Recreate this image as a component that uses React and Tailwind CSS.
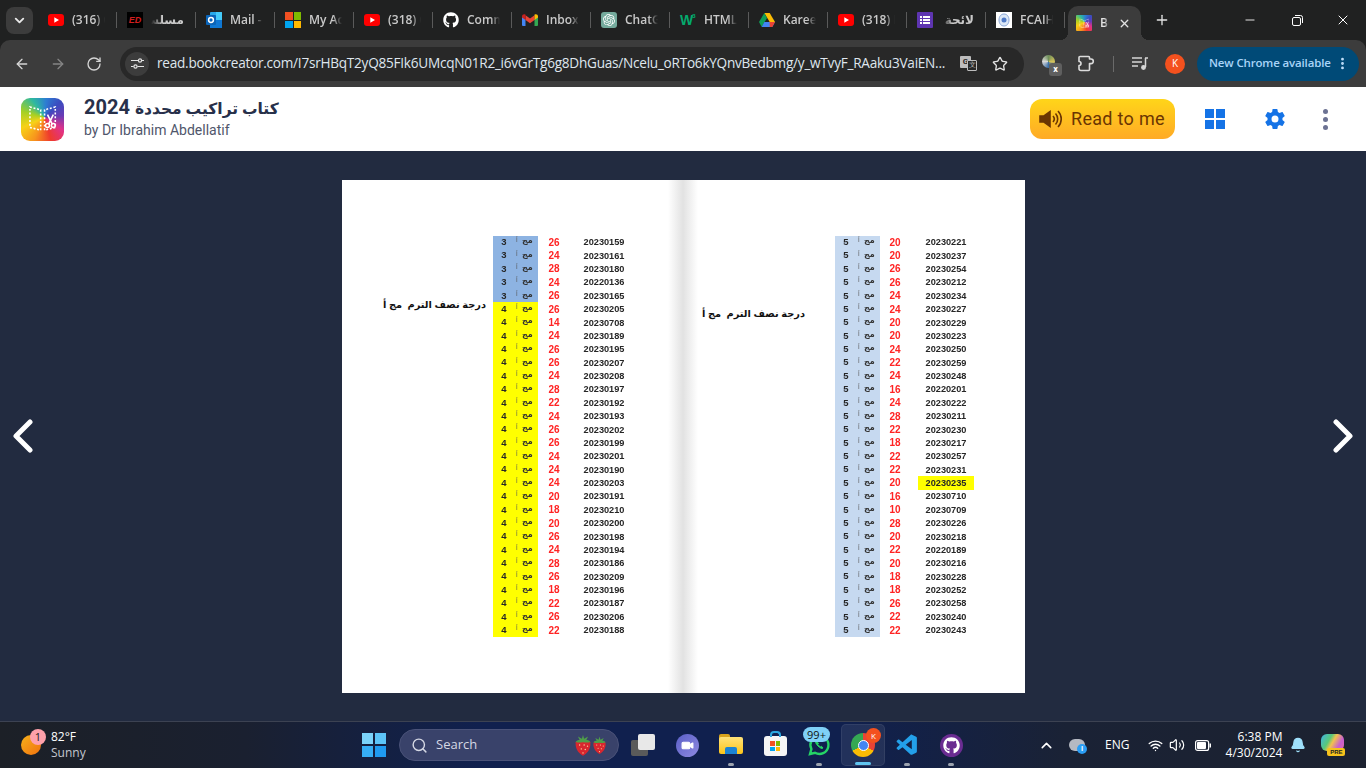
import React from "react";
import { FaGithub } from "react-icons/fa";
import { SiOpenai } from "react-icons/si";
import { VscVscode } from "react-icons/vsc";
import { ArrowLeft, ArrowRight, RotateCw, Star, Minus, X, Plus, ChevronDown, EllipsisVertical, Search, Wifi, Volume2, ChevronUp, Bell, Video } from "lucide-react";

const YT = () => (
  <svg width="16" height="12" viewBox="0 0 16 12"><rect width="16" height="12" rx="3" fill="#f00" /><path d="M6.3 3.3v5.4L11 6z" fill="#fff" /></svg>
);
const ED = () => (
  <div className="w-4 h-4 bg-black flex items-center justify-center text-[9px] leading-none font-bold italic text-[#d21f1f] font-['Liberation_Sans',sans-serif]">ED</div>
);
const Outlook = () => (
  <svg width="16" height="16" viewBox="0 0 16 16"><rect x="4" width="12" height="16" rx="1" fill="#28a8ea" /><rect x="4" y="8" width="12" height="8" fill="#0f78d4" /><rect x="10" y="0" width="6" height="8" fill="#50d9ff" opacity=".7" /><rect y="3" width="10" height="10" rx="1" fill="#0a64b8" /><circle cx="5" cy="8" r="2.4" fill="none" stroke="#fff" strokeWidth="1.5" /></svg>
);
const MS = () => (
  <div className="w-4 h-4 grid grid-cols-2 gap-px">
    <div className="bg-[#f25022]" /><div className="bg-[#7fba00]" /><div className="bg-[#00a4ef]" /><div className="bg-[#ffb900]" />
  </div>
);
const Gmail = () => (
  <svg width="16" height="12" viewBox="0 0 16 12"><path d="M0 2v9a1 1 0 0 0 1 1h2.5V5.5z" fill="#4285f4" /><path d="M16 2v9a1 1 0 0 1-1 1h-2.5V5.5z" fill="#34a853" /><path d="M3.5 6V1.2L8 4.6l4.5-3.4V6L8 9.2z" fill="#ea4335" /><path d="M0 2.4C0 .6 1.9-.4 3.3.6l.2.2V6L0 3.4z" fill="#c5221f" /><path d="M16 2.4c0-1.800-1.900-2.800-3.300-1.800l-.2.2V6L16 3.400z" fill="#fbbc04" /></svg>
);
const GPT = () => (
  <div className="w-4 h-4 rounded-[3px] bg-[#74aa9c] flex items-center justify-center text-white"><SiOpenai size={12} /></div>
);
const W3 = () => (
  <div className="w-4 h-4 flex items-start text-[#04aa6d] font-bold text-[14px] leading-[16px] font-['Liberation_Sans',sans-serif]">W<span className="text-[6px] leading-[8px] -ml-px">3</span></div>
);
const Drive = () => (
  <svg width="16" height="14" viewBox="0 0 16 14"><path d="M5.300 0h5.400l5.300 9h-5.300z" fill="#fbbc04" /><path d="M5.300 0 0 9l2.700 5 5.300-9z" fill="#0f9d58" /><path d="M2.700 14h10.600l2.700-5H5.300z" fill="#4285f4" /><path d="M10.700 9H16l-2.700 5h-2.600z" fill="#ea4335" /></svg>
);
const Forms = () => (
  <div className="w-4 h-4 bg-[#5e35b1] rounded-[1px] flex items-center justify-center">
    <svg width="10" height="8" viewBox="0 0 10 8" fill="#fff"><rect width="2" height="2" /><rect x="3" width="7" height="2" /><rect y="3" width="2" height="2" /><rect x="3" y="3" width="7" height="2" /><rect y="6" width="2" height="2" /><rect x="3" y="6" width="7" height="2" /></svg>
  </div>
);
const FCAI = () => (
  <div className="w-4 h-4 bg-white flex items-center justify-center">
    <svg width="12" height="14" viewBox="0 0 12 14"><path d="M6 1c3 0 5 2.500 5 6s-2 6-5 6-5-2.500-5-6 2-6 5-6z" fill="#dbe7f6" stroke="#8aa7d8" /><circle cx="6" cy="7" r="2.500" fill="#4f7ac7" /></svg>
  </div>
);
const BCIcon = ({ size = 16 }) => (
  <div style={{ width: size, height: size, borderRadius: size > 20 ? 9 : 1 }} className="bg-[conic-gradient(from_45deg_at_55%_45%,#3b4cc0,#6a3bb5,#e0328a,#ef3b2d,#f7941d,#f7d117,#a5d024,#2eb8a0,#2d7dd2,#3b4cc0)] flex items-center justify-center shrink-0">
    <svg width={size * 0.68} height={size * 0.68} viewBox="0 0 30 30" fill="none" stroke="#fff" strokeWidth="1.600" strokeDasharray="2 1.800"><path d="M2 3l11 3v21L2 24zM28 3L17 6v21l11-3z" /><circle cx="20" cy="22" r="2" strokeDasharray="none" /><circle cx="26" cy="22" r="2" strokeDasharray="none" /><path d="M20 11l5 10M26 11l-5 10" strokeDasharray="none" /></svg>
  </div>
);
const Strawberry = ({ w, h }) => (
  <svg width={w} height={h} viewBox="0 0 16 20">
    <path d="M8 19.500C3 17 .8 11.500 1.600 7.500 3 5 13 5 14.400 7.500 15.200 11.500 13 17 8 19.500z" fill="#d9262e" />
    <path d="M1.500 7C3 5.500 4 5.500 5 5.500L3.500 2.500 7 4.500 8 1l1 3.500 3.500-2L11 5.500c1 0 2 0 3.500 1.500-2 1.500-4 .5-6.500.5S3.500 8.500 1.500 7z" fill="#4f9e4a" />
    <g fill="#ffd9a0"><circle cx="5" cy="10" r=".6" /><circle cx="9" cy="10" r=".6" /><circle cx="12" cy="11" r=".6" /><circle cx="6.500" cy="13.500" r=".6" /><circle cx="10" cy="14" r=".6" /><circle cx="8" cy="17" r=".6" /></g>
  </svg>
);

const tabs = [
  [YT, "(316) C"], [ED, "مسلسل", true], [Outlook, "Mail -"], [MS, "My Acc"], [YT, "(318) C"], [FaGithub, "Comm"], [Gmail, "Inbox"],
  [GPT, "ChatG"], [W3, "HTML"], [Drive, "Karee"], [YT, "(318) I"], [Forms, "لائحة ج", true], [FCAI, "FCAIH"],
];

const left = [
  ["20230159", 26], ["20230161", 24], ["20230180", 28], ["20220136", 24], ["20230165", 26], ["20230205", 26], ["20230708", 14], ["20230189", 24], ["20230195", 26], ["20230207", 26],
  ["20230208", 24], ["20230197", 28], ["20230192", 22], ["20230193", 24], ["20230202", 26], ["20230199", 26], ["20230201", 24], ["20230190", 24], ["20230203", 24], ["20230191", 20],
  ["20230210", 18], ["20230200", 20], ["20230198", 26], ["20230194", 24], ["20230186", 28], ["20230209", 26], ["20230196", 18], ["20230187", 22], ["20230206", 26], ["20230188", 22],
];
const right = [
  ["20230221", 20], ["20230237", 20], ["20230254", 26], ["20230212", 26], ["20230234", 24], ["20230227", 24], ["20230229", 20], ["20230223", 20], ["20230250", 24], ["20230259", 22],
  ["20230248", 24], ["20220201", 16], ["20230222", 24], ["20230211", 28], ["20230230", 22], ["20230217", 18], ["20230257", 22], ["20230231", 22], ["20230235", 20], ["20230710", 16],
  ["20230709", 10], ["20230226", 28], ["20230218", 20], ["20220189", 22], ["20230216", 20], ["20230228", 18], ["20230252", 18], ["20230258", 26], ["20230240", 22], ["20230243", 22],
];

function Row({ id, mark, section, bg, redW, idMl, highlight }) {
  return (
    <div className="flex items-center h-[13.38px]">
      <div className={`flex items-center w-[45px] h-full ${bg}`}>
        <span className="w-[22px] text-center text-[9.500px] font-bold text-[#262626]">{section}</span>
        <span className="text-[6px] text-[#555] ml-[1px] w-[6px] -mt-[3px]">أ</span>
        <span className="text-[8px] font-bold text-[#333] -mt-[2px]">مج</span>
      </div>
      <span className={`${redW} text-center text-[10px] font-bold text-[#ff2323]`}>{mark}</span>
      <span className={`${idMl} w-[56px] h-full pt-[2px] flex items-center justify-center text-[9.200px] font-bold text-[#262626] ${highlight ? "bg-[#ffff00]" : ""}`}>{id}</span>
    </div>
  );
}

const Label = () => (
  <div dir="rtl" className="w-full text-[9.800px] font-bold text-[#111] whitespace-nowrap leading-[14px]">درجة نصف الترم&nbsp; مج أ</div>
);

function TaskIcon({ children, dot, active }) {
  return (
    <div className={`relative w-[44px] h-[42px] flex items-center justify-center rounded-[5px] ${active ? "bg-[#ffffff14] border border-[#ffffff12]" : ""}`}>
      {children}
      {dot && <div className="absolute bottom-0 left-1/2 -translate-x-1/2 w-[6px] h-[3px] rounded-full bg-[#9ca3af]" />}
      {active && <div className="absolute bottom-0 left-1/2 -translate-x-1/2 w-[16px] h-[3px] rounded-full bg-[#60c5f1]" />}
    </div>
  );
}

export default function App() {
  return (
    <div className="w-[1366px] h-[768px] overflow-hidden flex flex-col bg-[#202121] font-['Roboto',sans-serif]">
      {/* tab strip */}
      <div className="h-10 flex items-center shrink-0 font-['Open_Sans','DejaVu_Sans',sans-serif]">
        <div className="w-[27px] h-[27px] ml-[6px] mr-[7px] rounded-lg bg-[#3c3c3c] flex items-center justify-center text-[#e8e8e8]"><ChevronDown size={15} strokeWidth={3} /></div>
        {tabs.map(([Icon, title, rtl], i) => (
          <div key={i} className="w-[79px] h-full flex items-center pl-2 relative shrink-0">
            <div className="w-4 flex items-center justify-center text-white"><Icon size={16} /></div>
            <span dir={rtl ? "rtl" : "ltr"} className={`ml-2 w-[33px] overflow-hidden whitespace-nowrap text-[12px] font-semibold text-[#c9c9c9] ${rtl ? "[mask-image:linear-gradient(270deg,#000_65%,transparent)]" : "[mask-image:linear-gradient(90deg,#000_72%,transparent)]"}`}>{title}</span>
            <div className="absolute right-[2px] w-px h-[16px] bg-[#5a5a5a]" />
          </div>
        ))}
        <div className="relative w-[73px] h-[34px] self-end rounded-t-[10px] bg-[#3c3c3c] flex items-center pl-2 shrink-0 ml-[1px]">
          <div className="absolute -left-2 bottom-0 w-2 h-2 bg-[radial-gradient(circle_at_0_0,transparent_8px,#3c3c3c_8px)]" />
          <div className="absolute -right-2 bottom-0 w-2 h-2 bg-[radial-gradient(circle_at_100%_0,transparent_8px,#3c3c3c_8px)]" />
          <BCIcon />
          <span className="ml-2 w-[9px] overflow-hidden text-[12px] font-semibold text-[#e3e3e3] [mask-image:linear-gradient(90deg,#000_50%,transparent)]">Book</span>
          <X size={13} strokeWidth={2.500} className="ml-[9px] text-[#e3e3e3]" />
        </div>
        <Plus size={16} strokeWidth={2} className="ml-[13px] text-[#e3e3e3]" />
        <div className="flex-1" />
        <Minus size={14} strokeWidth={1.500} className="text-white mr-[35px]" />
        <svg width="11" height="11" viewBox="0 0 11 11" fill="none" stroke="#fff" className="mr-[32px]"><rect x=".5" y="2.500" width="8" height="8" rx="1.500" /><path d="M3 .5h5.500a2 2 0 0 1 2 2V8" /></svg>
        <X size={16} strokeWidth={1.500} className="text-white mr-[15px]" />
      </div>

      {/* toolbar */}
      <div className="h-[47px] shrink-0 bg-[#3c3c3c] rounded-t-[10px] flex items-center text-[#d5d5d5]">
        <ArrowLeft size={16} strokeWidth={2} className="ml-[14px]" />
        <ArrowRight size={16} strokeWidth={2} className="ml-[20px] text-[#858585]" />
        <RotateCw size={16} strokeWidth={2} className="ml-[20px]" />
        <div className="ml-[18px] w-[904px] h-[34px] rounded-full bg-[#282828] flex items-center pl-[5px] text-[#e8e8e8]">
          <div className="w-[24px] h-[24px] rounded-full bg-[#3c3c3c] flex items-center justify-center">
            <svg width="13" height="11" viewBox="0 0 13 11" fill="none" stroke="#e3e3e3" strokeWidth="1.200"><path d="M0 2.500h7M10.500 2.500H13M0 8.500h2.500M6.500 8.500H13" /><circle cx="9" cy="2.500" r="1.600" /><circle cx="4.500" cy="8.500" r="1.600" /></svg>
          </div>
          <span className="ml-[8px] w-[796px] whitespace-nowrap overflow-hidden text-[13.600px] text-[#dfe6ee] font-['Open_Sans',sans-serif] tracking-[-0.25px]">read.bookcreator.com/I7srHBqT2yQ85FIk6UMcqN01R2_i6vGrTg6g8DhGuas/Ncelu_oRTo6kYQnvBedbmg/y_wTvyF_RAaku3VaiEN...</span>
          <div className="ml-[7px] relative w-[17px] h-[15px]">
            <div className="absolute left-0 top-0 w-[11px] h-[12px] rounded-[1px] bg-[#bdbdbd] text-[#282828] text-[8px] font-bold leading-[12px] text-center">G</div>
            <div className="absolute right-0 bottom-0 w-[10px] h-[11px] rounded-[1px] bg-[#282828] border border-[#bdbdbd] text-[#bdbdbd] text-[7px] leading-[9px] text-center">文</div>
          </div>
          <Star size={16} strokeWidth={2} className="ml-[15px] text-[#e3e3e3]" />
        </div>
        <div className="relative ml-[18px] w-[20px] h-[20px]">
          <div className="absolute left-0 top-[1px] w-[13px] h-[13px] rounded-full bg-[conic-gradient(#6f8f5a,#d2c05a,#3c6fa8,#d8d8d8,#6f8f5a)]" />
          <div className="absolute right-0 bottom-[-2px] w-[13px] h-[13px] rounded-[3px] bg-[#5f5f5f] text-white text-[9px] font-bold leading-[13px] text-center">x</div>
        </div>
        <svg width="18" height="17" viewBox="0 0 18 17" fill="none" stroke="#dcdcdc" strokeWidth="1.600" strokeLinejoin="round" className="ml-[16px]"><path d="M1 2.500a1 1 0 0 1 1-1h8.500a1 1 0 0 1 1 1V4h1.500a2.300 2.300 0 0 1 0 4.600h-1.500v5.900a1 1 0 0 1-1 1H3a2 2 0 0 1-2-2V10.500a2 2 0 0 0 0-4z" /></svg>
        <div className="ml-[17px] w-px h-[16px] bg-[#6a6a6a]" />
        <svg width="16" height="13" viewBox="0 0 16 13" fill="none" stroke="#d5d5d5" strokeWidth="1.500" className="ml-[18px]"><path d="M0 1h10M0 5h10M0 9h6" /><path d="M13.500 1v9" /><path d="M13 1h3" /><circle cx="11.500" cy="10.500" r="1.700" fill="#d5d5d5" /></svg>
        <div className="ml-[17px] w-5 h-5 rounded-full bg-[#f4511e] text-white text-[10px] flex items-center justify-center font-['Open_Sans',sans-serif]">K</div>
        <div className="ml-[12px] w-[162px] h-[34px] rounded-full bg-[#004a77] flex items-center pl-[12px] text-[#a8d4f8] font-semibold whitespace-nowrap font-['Open_Sans',sans-serif]">
          <span className="text-[11.500px] tracking-[-0.15px] -mt-[2px]">New Chrome available</span>
          <EllipsisVertical size={15} strokeWidth={2.500} className="ml-[4px] text-[#c2e0fb]" />
        </div>
      </div>

      {/* book header */}
      <div className="h-16 shrink-0 bg-white flex items-center">
        <div className="ml-[21px]"><BCIcon size={43} /></div>
        <div className="ml-[20px] -mt-[4px]">
          <div className="text-[20px] leading-[22px] font-bold text-[#27304a] font-['Roboto','DejaVu_Sans',sans-serif]" dir="rtl"><span className="text-[15.500px]">كتاب تراكيب محددة</span> 2024</div>
          <div className="text-[14px] leading-[18px] text-[#4f566b] mt-[1px]">by Dr Ibrahim Abdellatif</div>
        </div>
        <div className="flex-1" />
        <div className="w-[145px] h-10 rounded-xl bg-[linear-gradient(#ffd519,#ffaa26)] flex items-center pl-[9px] text-[#6b3502]">
          <svg width="24" height="20" viewBox="0 0 24 20" fill="none" stroke="#6b3502" strokeWidth="1.600"><path d="M1 7h4l6-4.500v15L5 13H1z" fill="#6b3502" /><path d="M14 7a4.500 4.500 0 0 1 0 6M16.500 4.500a8 8 0 0 1 0 11M19 2a11.500 11.500 0 0 1 0 16" /></svg>
          <span className="ml-[8px] -mt-[2px] text-[18px] font-normal tracking-[0.3px] whitespace-nowrap">Read to me</span>
        </div>
        <div className="ml-[30px] w-[20px] h-[20px] grid grid-cols-2 gap-[2px]">
          <div className="bg-[#1573e6]" /><div className="bg-[#1573e6]" /><div className="bg-[#1573e6]" /><div className="bg-[#1573e6]" />
        </div>
        <svg width="24" height="24" viewBox="0 0 24 24" fill="#1573e6" className="ml-[38px]"><path d="M19.430 12.980c.04-.32.07-.64.07-.98s-.03-.66-.07-.98l2.110-1.650c.19-.15.24-.42.12-.64l-2-3.460c-.12-.22-.39-.3-.61-.22l-2.490 1c-.52-.4-1.080-.73-1.690-.98l-.38-2.650A.49.49 0 0 0 14 2h-4c-.25 0-.46.18-.49.42l-.38 2.650c-.61.25-1.170.59-1.690.98l-2.490-1c-.23-.09-.49 0-.61.22l-2 3.460c-.13.22-.07.49.12.64l2.110 1.650c-.04.32-.07.65-.07.98s.03.66.07.98l-2.110 1.650c-.19.15-.24.42-.12.64l2 3.460c.12.22.39.3.61.22l2.490-1c.52.4 1.080.73 1.690.98l.38 2.650c.03.24.24.42.49.42h4c.25 0 .46-.18.49-.42l.38-2.650c.61-.25 1.170-.59 1.690-.98l2.490 1c.23.09.49 0 .61-.22l2-3.460c.12-.22.07-.49-.12-.64zM12 15.500a3.500 3.500 0 1 1 0-7 3.500 3.500 0 0 1 0 7z" /></svg>
        <div className="ml-[36px] mr-[38px] flex flex-col gap-[3px]">
          <div className="w-[5px] h-[5px] rounded-full bg-[#6c7293]" /><div className="w-[5px] h-[5px] rounded-full bg-[#6c7293]" /><div className="w-[5px] h-[5px] rounded-full bg-[#6c7293]" />
        </div>
      </div>

      {/* reader */}
      <div className="flex-1 bg-[#222b40] flex items-center justify-between px-[12px] min-h-0">
        <svg width="22" height="34" viewBox="0 0 22 34" fill="none" stroke="#fff" strokeWidth="5" strokeLinecap="round" strokeLinejoin="round" className="mr-[1px]"><path d="M18 3 4 17l14 14" /></svg>
        <div className="relative w-[683px] h-[513px] bg-white flex font-['Liberation_Sans','DejaVu_Sans',sans-serif] text-[#222]">
          <div className="w-[342px] flex items-start pt-[56px]">
            <div className="w-[144px] pt-[62px]"><Label /></div>
            <div className="ml-[7px] blur-[0.3px]">
              {left.map(([id, m], i) => (
                <Row key={id} id={id} mark={m} section={i < 5 ? 3 : 4} bg={i < 5 ? "bg-[#8db3e2]" : "bg-[#ffff00]"} redW="w-[32px]" idMl="ml-[6px]" />
              ))}
            </div>
          </div>
          <div className="w-[341px] flex items-start pt-[56px]">
            <div className="w-[121px] pt-[71px]"><Label /></div>
            <div className="ml-[30px] blur-[0.3px]">
              {right.map(([id, m]) => (
                <Row key={id} id={id} mark={m} section={5} bg="bg-[#c6d9f0]" redW="w-[30px]" idMl="ml-[8px]" highlight={id === "20230235"} />
              ))}
            </div>
          </div>
          <div className="absolute top-0 bottom-0 left-[326px] w-[30px] bg-[linear-gradient(90deg,transparent,#e2e2e2_50%,transparent)]" />
        </div>
        <svg width="22" height="34" viewBox="0 0 22 34" fill="none" stroke="#fff" strokeWidth="5" strokeLinecap="round" strokeLinejoin="round"><path d="m4 3 14 14L4 31" /></svg>
      </div>

      {/* taskbar */}
      <div className="h-[47px] shrink-0 border-t border-[#3c4252] bg-[linear-gradient(90deg,#1c2027_0%,#1a2030_18%,#10204e_35%,#10204e_62%,#1a2235_78%,#1c2230_100%)] flex items-center text-white font-['Open_Sans',sans-serif]">
        <div className="relative ml-[21px] w-[20px] h-[20px] rounded-full bg-[linear-gradient(135deg,#f6b21b,#f0700e)]">
          <div className="absolute -top-[6px] left-[9px] w-4 h-4 rounded-full bg-[#ffa1ab] text-[#222] text-[11px] leading-4 text-center">1</div>
        </div>
        <div className="ml-[10px] w-[60px] text-[12px] leading-[16px]">
          <div>82°F</div>
          <div className="text-[#c5c8d0]">Sunny</div>
        </div>
        <div className="ml-[251px] w-[24px] h-[24px] grid grid-cols-2 gap-[2px]">
          <div className="bg-[#7bd3fa]" /><div className="bg-[#5cc4f8]" /><div className="bg-[#36aef5]" /><div className="bg-[#1f9af0]" />
        </div>
        <div className="ml-[13px] w-[220px] h-[32px] rounded-full bg-[#39426a] border border-[#4a5278] flex items-center pl-[11px] text-[13px] text-[#d5d8e4]">
          <Search size={17} strokeWidth={2} />
          <span className="ml-[8px]">Search</span>
          <div className="ml-auto mr-[11px] flex items-center">
            <Strawberry w={18} h={24} />
            <Strawberry w={15} h={20} />
          </div>
        </div>
        <div className="ml-[2px] flex items-center">
          <TaskIcon>
            <div className="relative w-[24px] h-[22px]">
              <div className="absolute left-0 bottom-0 w-[17px] h-[16px] rounded-[2px] bg-[#5a5a5a]" />
              <div className="absolute right-0 top-0 w-[17px] h-[16px] rounded-[2px] bg-[#e8e8e8]" />
            </div>
          </TaskIcon>
          <TaskIcon>
            <div className="w-[23px] h-[23px] rounded-full bg-[linear-gradient(135deg,#5a5fc7,#8f8ae0)] flex items-center justify-center"><Video size={13} fill="#fff" stroke="#fff" /></div>
          </TaskIcon>
          <TaskIcon dot>
            <div className="relative w-[24px] h-[20px] -mt-[2px]">
              <div className="absolute top-0 left-0 w-[11px] h-[6px] rounded-t-[2px] bg-[#d9a31c]" />
              <div className="absolute top-[3px] left-0 right-0 bottom-0 rounded-[2px] bg-[linear-gradient(#ffe27a,#fcc419)]" />
              <div className="absolute bottom-0 left-[6px] w-[12px] h-[7px] rounded-t-[2px] bg-[#1b83d4]" />
            </div>
          </TaskIcon>
          <TaskIcon>
            <div className="w-[23px] h-[20px] mt-[2px] rounded-[3px] bg-[#f5f5f5] relative flex items-center justify-center">
              <div className="absolute -top-[5px] left-[6px] w-[11px] h-[6px] rounded-t-[4px] border-2 border-b-0 border-[#2aa7e0]" />
              <div className="w-[10px] h-[10px] grid grid-cols-2 gap-px">
                <div className="bg-[#f25022]" /><div className="bg-[#7fba00]" /><div className="bg-[#00a4ef]" /><div className="bg-[#ffb900]" />
              </div>
            </div>
          </TaskIcon>
          <TaskIcon dot>
            <svg width="24" height="24" viewBox="0 0 24 24" fill="none" stroke="#25d366" strokeWidth="2.400"><path d="M3 21l1.400-5A9 9 0 1 1 8 19.800z" /><path d="M9 8c-1 1 0 3 2 5s4 3 5 2l-1.500-1.700-1.200.7-2.500-2.500.7-1.300z" fill="#25d366" strokeWidth="1" /></svg>
            <div className="absolute top-[3px] left-[6px] w-[27px] h-[15px] rounded-full bg-[#7fd0f7] text-[#111] text-[11px] leading-[15px] text-center">99+</div>
          </TaskIcon>
          <TaskIcon active>
            <div className="w-[24px] h-[24px] rounded-full bg-[conic-gradient(#ea4335_0deg_120deg,#fbbc04_120deg_240deg,#34a853_240deg_360deg)] flex items-center justify-center">
              <div className="w-[11px] h-[11px] rounded-full bg-[#4285f4] border border-white" />
            </div>
            <div className="absolute top-[3px] right-[3px] w-[15px] h-[15px] rounded-full bg-[#f4511e] text-[8px] leading-[15px] text-center">K</div>
          </TaskIcon>
          <TaskIcon dot><VscVscode size={25} className="text-[#23a0ea]" /></TaskIcon>
          <TaskIcon dot>
            <div className="w-[23px] h-[23px] rounded-full bg-[#6a2c91] flex items-center justify-center text-white"><FaGithub size={17} /></div>
          </TaskIcon>
        </div>
        <ChevronUp size={17} strokeWidth={2.200} className="ml-[65px]" />
        <div className="relative ml-[14px] w-[16px] h-[12px] rounded-full bg-[#b5b9c2]">
          <div className="absolute -right-[2px] -bottom-[3px] w-[10px] h-[10px] rounded-full bg-[#2a9df4] text-[7px] leading-[10px] text-center font-bold">i</div>
        </div>
        <span className="ml-[20px] text-[12px] font-medium">ENG</span>
        <Wifi size={15} strokeWidth={2.200} className="ml-[19px]" />
        <Volume2 size={16} strokeWidth={1.800} className="ml-[6px]" />
        <svg width="16" height="11" viewBox="0 0 16 11" className="ml-[10px]"><rect x=".6" y=".6" width="13" height="9.800" rx="2" fill="none" stroke="#fff" strokeWidth="1.200" /><rect x="2" y="2" width="9" height="7" rx="1" fill="#fff" /><rect x="14.500" y="3.500" width="1.500" height="4" fill="#fff" /></svg>
        <div className="ml-[10px] w-[61px] text-right text-[12px] leading-[16px] whitespace-nowrap">
          <div>6:38 PM</div>
          <div>4/30/2024</div>
        </div>
        <Bell size={16} fill="#9fe0fb" stroke="#9fe0fb" className="ml-[8px]" />
        <div className="relative ml-[15px] w-[23px] h-[22px]">
          <div className="absolute inset-x-0 top-0 h-[17px] rounded-[6px] bg-[linear-gradient(120deg,#3fb3e6,#58c878_35%,#f2c14e_50%,#c75fd0_75%,#e26aa8)]" />
          <div className="absolute -right-[1px] bottom-0 w-[18px] h-[8px] rounded-[2px] bg-[#f6c21c] text-[#222] text-[6px] font-bold leading-[8px] text-center font-['Liberation_Sans',sans-serif]">PRE</div>
        </div>
      </div>
    </div>
  );
}
